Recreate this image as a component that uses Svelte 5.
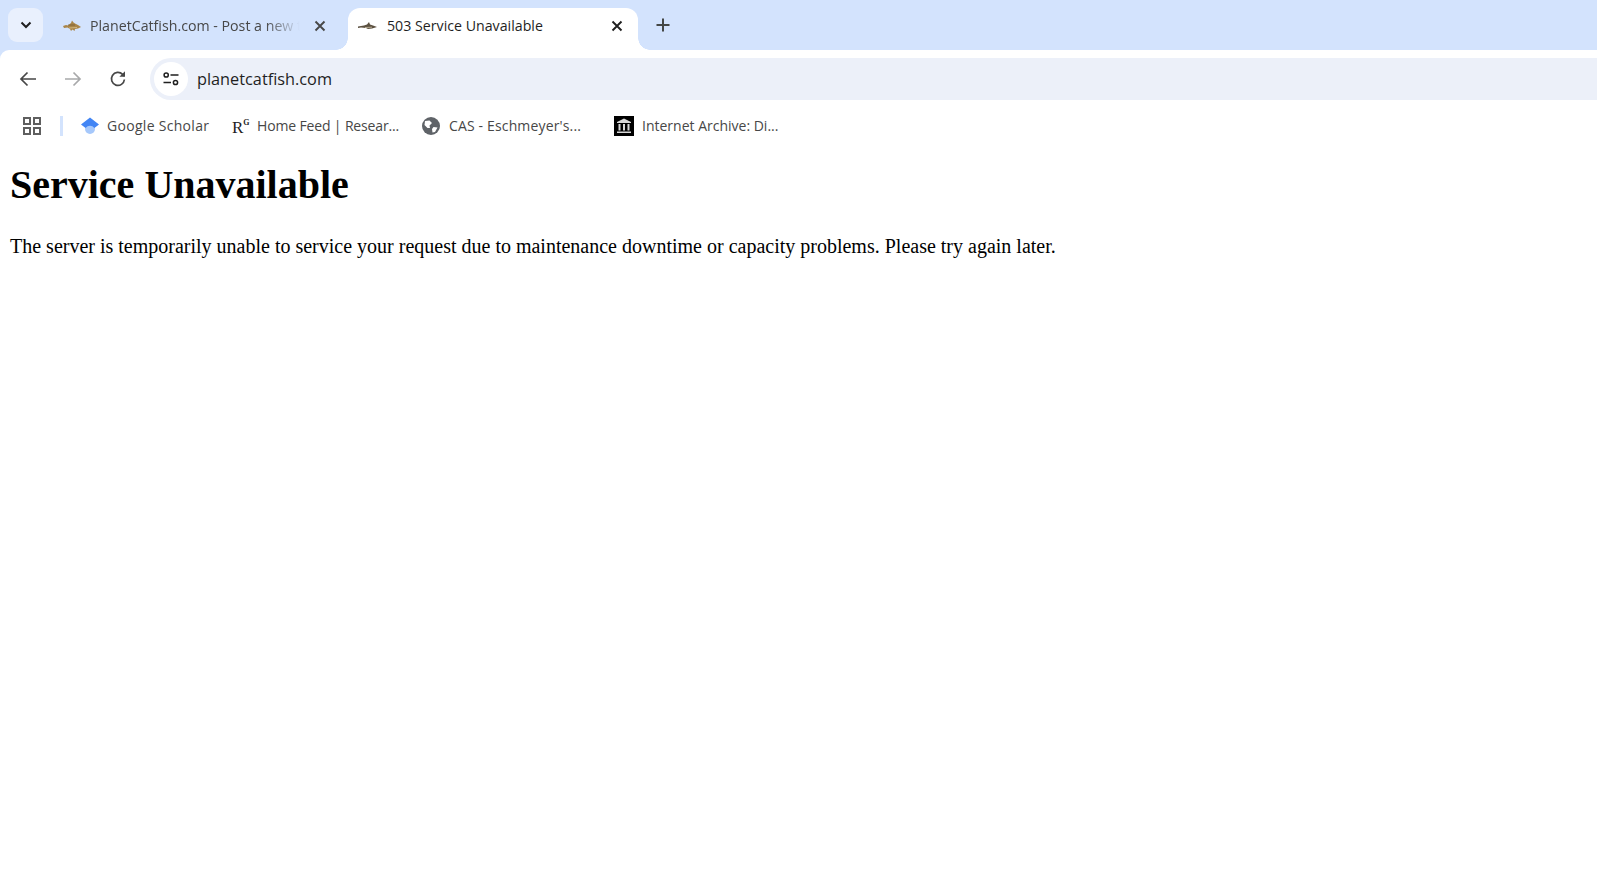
<script lang="ts">
	const bookmarks = [
		{ id: 'scholar', label: 'Google Scholar' },
		{ id: 'rg', label: 'Home Feed | Resear...' },
		{ id: 'cas', label: 'CAS - Eschmeyer\'s...' },
		{ id: 'archive', label: 'Internet Archive: Di...' }
	];
</script>

{#snippet closeIcon()}
	<svg width="12" height="12" viewBox="0 0 12 12"><path d="M1.5 1.5 L10.5 10.5 M10.5 1.5 L1.5 10.5" stroke="currentColor" stroke-width="1.9" fill="none" /></svg>
{/snippet}

<div class="chrome">
	<div class="tabstrip">
		<button class="tab-search" aria-label="Search tabs">
			<svg width="12" height="8" viewBox="0 0 12 8"><path d="M1.5 1.5 L6 6 L10.5 1.5" stroke="#1f1f1f" stroke-width="2" fill="none" /></svg>
		</button>
		<div class="tab">
			<svg class="fav" width="18" height="12" viewBox="0 0 18 12">
				<path d="M0 6 L3 5 L5 5.5 L8 3 L9 0.5 L10.5 2.5 L12 3.5 L15 5 L18 7 L15 8.5 L12 9 L11.5 11 L9.5 9.5 L8 11 L7 9 L4.5 7.5 L1 8 Z" fill="#a98549" />
				<path d="M5 5 L12 5" stroke="#6e5630" stroke-width="1" opacity="0.7" />
				<path d="M6 8 L14 7.5" stroke="#dcc48e" stroke-width="1" opacity="0.8" />
			</svg>
			<span class="title fade">PlanetCatfish.com - Post a new topic</span>
			<span class="close">{@render closeIcon()}</span>
		</div>
		<div class="tab active">
			<svg class="fav" width="19" height="10" viewBox="0 0 19 10">
				<path d="M0 5.5 L6 4.5 L9 3.5 L11 1 L12 3.5 L15 4.5 L19 6 L14 7.5 L10 8 L8 7 L3 6.5 L0 7 Z" fill="#5b5040" />
				<path d="M7 6.5 L14 6.2" stroke="#c2b69c" stroke-width="0.9" />
			</svg>
			<span class="title">503 Service Unavailable</span>
			<span class="close">{@render closeIcon()}</span>
		</div>
		<button class="new-tab" aria-label="New tab">
			<svg width="14" height="14" viewBox="0 0 14 14"><path d="M7 0.5 V13.5 M0.5 7 H13.5" stroke="#444746" stroke-width="2" fill="none" /></svg>
		</button>
	</div>

	<div class="toolbar">
		<div class="nav">
			<svg width="18" height="16" viewBox="0 0 18 16"><path d="M17 8 H2 M8.5 1.5 L2 8 L8.5 14.5" stroke="#474747" stroke-width="1.7" fill="none" /></svg>
			<svg width="18" height="16" viewBox="0 0 18 16"><path d="M1 8 H16 M9.5 1.5 L16 8 L9.5 14.5" stroke="#a8a9aa" stroke-width="1.7" fill="none" /></svg>
			<svg width="18" height="18" viewBox="0 0 18 18"><path d="M15.4 9.5 A6.5 6.5 0 1 1 13.6 4.4 L15.5 6.2" stroke="#474747" stroke-width="1.7" fill="none" /><path d="M16 1.2 V6.8 H10.4 Z" fill="#474747" /></svg>
		</div>
		<div class="omnibox">
			<span class="site-info">
				<svg width="16" height="14" viewBox="0 0 16 14">
					<circle cx="3.2" cy="3" r="2.1" fill="none" stroke="#1f1f1f" stroke-width="1.5" />
					<path d="M7.5 3 H15.5 M0.5 10.5 H8" stroke="#1f1f1f" stroke-width="1.5" />
					<circle cx="12.5" cy="10.5" r="2.1" fill="none" stroke="#1f1f1f" stroke-width="1.5" />
				</svg>
			</span>
			<span class="url">planetcatfish.com</span>
		</div>
	</div>

	<div class="bookmarks">
		<svg class="apps" width="18" height="18" viewBox="0 0 18 18" fill="none" stroke="#5f5f5f" stroke-width="2">
			<rect x="1" y="1" width="6" height="6" /><rect x="11" y="1" width="6" height="6" />
			<rect x="1" y="11" width="6" height="6" /><rect x="11" y="11" width="6" height="6" />
		</svg>
		<span class="sep"></span>
		{#each bookmarks as b}
			<div class="bookmark {b.id}">
				{#if b.id === 'scholar'}
					<svg class="ico" width="18" height="18" viewBox="0 0 18 18">
						<circle cx="9" cy="12" r="5" fill="#a6c8fb" />
						<path d="M0 7.5 L9 0.5 L18 7.5 L13.4 11 A5.6 5.6 0 0 0 4.6 11 Z" fill="#4285f4" />
					</svg>
				{:else if b.id === 'rg'}
					<span class="ico rg-mark">R<sup>G</sup></span>
				{:else if b.id === 'cas'}
					<svg class="ico" width="18" height="18" viewBox="0 0 18 18">
						<circle cx="9" cy="9" r="9" fill="#5f6368" />
						<path d="M3 4 L7.5 3.5 L10 6 L7.5 8.5 L8 11 L5.5 11 L2.5 8 Z M11.5 10 L15.5 10.5 L13 15 L10.5 15.5 L10 12 Z" fill="#fff" />
					</svg>
				{:else}
					<svg class="ico" width="20" height="20" viewBox="0 0 20 20">
						<rect width="20" height="20" fill="#000" />
						<path d="M3 6 L10 2.5 L17 6 V7 H3 Z M3 15.5 H17 V17 H3 Z" fill="#d8d8d8" />
						<path d="M4.5 8 H6.5 V14.5 H4.5 Z M9 8 H11 V14.5 H9 Z M13.5 8 H15.5 V14.5 H13.5 Z" fill="#d8d8d8" />
					</svg>
				{/if}
				<span class="label">{b.label}</span>
			</div>
		{/each}
	</div>
</div>

<main>
	<h1>Service Unavailable</h1>
	<p>The server is temporarily unable to service your request due to maintenance downtime or capacity problems. Please try again later.</p>
</main>

<style>
	:global(body) {
		margin: 0;
		background: #fff;
		overflow: hidden;
	}

	.chrome {
		font-family: "Open Sans", "Noto Sans", sans-serif;
		background: #d3e3fd;
	}

	button {
		border: none;
		padding: 0;
		background: none;
		display: flex;
		align-items: center;
		justify-content: center;
	}

	.tabstrip {
		height: 50px;
		display: flex;
		align-items: flex-end;
		padding-left: 8px;
	}

	.tab-search {
		width: 35px;
		height: 34px;
		margin-bottom: 8px;
		border-radius: 9px;
		background: #e9f0fd;
	}

	.tab {
		height: 42px;
		display: flex;
		align-items: center;
		box-sizing: border-box;
		padding-bottom: 7px;
		position: relative;
		font-size: 14.2px;
		color: #474747;
		margin-left: 4px;
		width: 301px;
		padding-left: 16px;
		padding-right: 22px;
	}

	.tab.active {
		width: 290px;
		padding-left: 10px;
		padding-right: 15px;
		margin-left: 0;
		background: #fff;
		border-radius: 12px 12px 0 0;
		color: #1f1f1f;
	}

	.tab.active::before,
	.tab.active::after {
		content: "";
		position: absolute;
		bottom: 0;
		width: 12px;
		height: 12px;
	}

	.tab.active::before {
		left: -12px;
		background: radial-gradient(circle at 0 0, transparent 11.5px, #fff 12px);
	}

	.tab.active::after {
		right: -12px;
		background: radial-gradient(circle at 100% 0, transparent 11.5px, #fff 12px);
	}

	.fav {
		flex: none;
		margin-right: 9px;
	}

	.active .fav {
		margin-right: 10px;
	}

	.title {
		flex: 1;
		white-space: nowrap;
		overflow: hidden;
		line-height: 20px;
	}

	.fade {
		-webkit-mask-image: linear-gradient(to right, #000 82%, transparent 98%);
		mask-image: linear-gradient(to right, #000 82%, transparent 98%);
	}

	.close {
		flex: none;
		display: flex;
		margin-left: 10px;
	}

	.new-tab {
		margin: 0 0 14px 18px;
		width: 14px;
		height: 22px;
	}

	.toolbar {
		height: 58px;
		background: #fff;
		border-radius: 9px 0 0 0;
		display: flex;
		align-items: center;
	}

	.nav {
		display: flex;
		align-items: center;
		gap: 27px;
		padding-left: 19px;
		width: 131px;
		box-sizing: border-box;
	}

	.omnibox {
		flex: 1;
		height: 42px;
		background: #ecf0f9;
		border-radius: 21px 0 0 21px;
		display: flex;
		align-items: center;
		padding-left: 4px;
		margin-left: 19px;
	}

	.site-info {
		width: 34px;
		height: 34px;
		border-radius: 50%;
		background: #fff;
		display: flex;
		align-items: center;
		justify-content: center;
	}

	.url {
		margin-left: 9px;
		font-size: 16.3px;
		color: #1f1f1f;
	}

	.bookmarks {
		height: 36px;
		background: #fff;
		display: flex;
		align-items: center;
		padding-left: 23px;
		font-size: 14px;
		color: #474747;
	}

	.sep {
		width: 3px;
		height: 20px;
		background: #d3e3fd;
		margin: 0 18px 0 19px;
	}

	.bookmark {
		display: flex;
		align-items: center;
	}

	.ico {
		flex: none;
	}

	.label {
		margin-left: 8px;
		margin-top: -2px;
		white-space: nowrap;
	}

	.scholar { width: 151px; }
	.scholar .label { letter-spacing: 0.3px; }

	.bookmark.rg { width: 190px; }
	.rg .label {
		margin-left: 9px;
		letter-spacing: -0.15px;
	}

	.bookmark.cas { width: 192px; }
	.cas .label {
		margin-left: 9px;
		letter-spacing: 0.15px;
	}

	.rg-mark {
		font-family: "Liberation Serif", serif;
		font-size: 17px;
		color: #1f1f1f;
		line-height: 18px;
		width: 16px;
		padding-top: 3px;
	}

	.rg-mark sup {
		font-size: 8px;
		font-weight: bold;
		vertical-align: 8px;
		line-height: 0;
	}

	main {
		background: #fff;
		padding: 0 10px;
		font-family: "Liberation Serif", "Times New Roman", serif;
		font-size: 20px;
		color: #000;
		height: 733px;
	}

	h1 {
		font-size: 40px;
		margin: 0 0 26.8px;
		padding-top: 17px;
	}

	p {
		margin: 0;
	}
</style>
